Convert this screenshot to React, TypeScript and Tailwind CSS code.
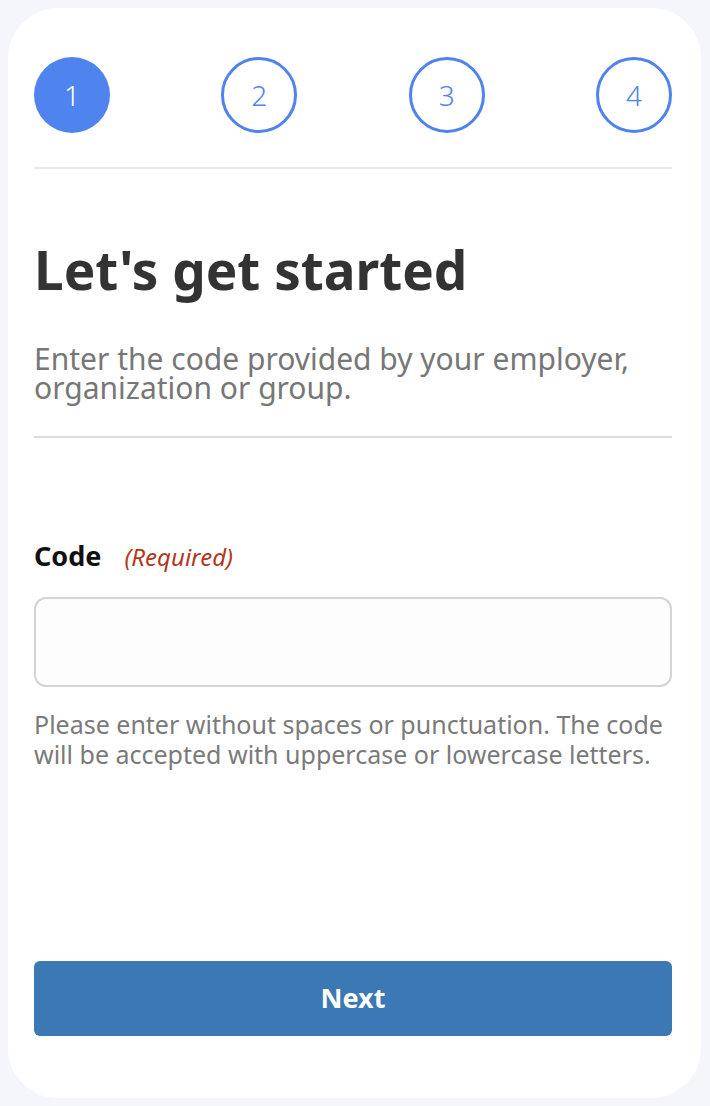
import React from "react";

const steps = [1, 2, 3, 4];

export default function App() {
  return (
    <div className="w-[710px] h-[1106px] bg-[#f5f6fb] pl-2 pr-[9px] py-2 font-['Noto_Sans',sans-serif]">
      <div className="bg-white rounded-[50px] h-full flex flex-col pl-[26px] pr-[29px] pt-[49px] pb-[62px]">
        {/* stepper */}
        <div className="flex justify-between">
          {steps.map((n) =>
            n === 1 ? (
              <div key={n} className="size-[76px] rounded-full bg-[#4f83ee] text-white flex items-center justify-center text-[28px] font-light">
                {n}
              </div>
            ) : (
              <div key={n} className="size-[76px] rounded-full border-[3px] border-[#4f83ee] text-[#4f83ee] flex items-center justify-center text-[28px] font-light">
                {n}
              </div>
            )
          )}
        </div>
        <div className="mt-[34px] h-[2px] bg-[#e7e7ed]" />

        <h1 className="mt-[71px] text-[53px] leading-[60px] font-bold text-[#333333]">Let's get started</h1>
        <p className="mt-[44px] text-[30px] leading-[29px] text-[#777777]">
          Enter the code provided by your employer, organization or group.
        </p>
        <div className="mt-[34px] h-[2px] bg-[#dcdcdc]" />

        <div className="mt-[100px] flex items-baseline gap-[23px] leading-[36px]">
          <span className="text-[27px] font-bold text-[#111111]">Code</span>
          <span className="text-[24px] italic text-[#b0391e]">(Required)</span>
        </div>
        <input
          type="text"
          className="mt-[22px] h-[90px] w-full rounded-[12px] border-2 border-[#d4d4d4] bg-[#fdfdfd] outline-none px-4 text-[24px]"
        />
        <p className="mt-[22px] text-[25px] leading-[30px] text-[#7a7a7a]">
          Please enter without spaces or punctuation. The code will be accepted with uppercase or lowercase letters.
        </p>

        <button type="button" className="mt-auto h-[75px] w-full rounded-[6px] bg-[#3b78b4] text-white text-[27px] font-bold">
          Next
        </button>
      </div>
    </div>
  );
}
